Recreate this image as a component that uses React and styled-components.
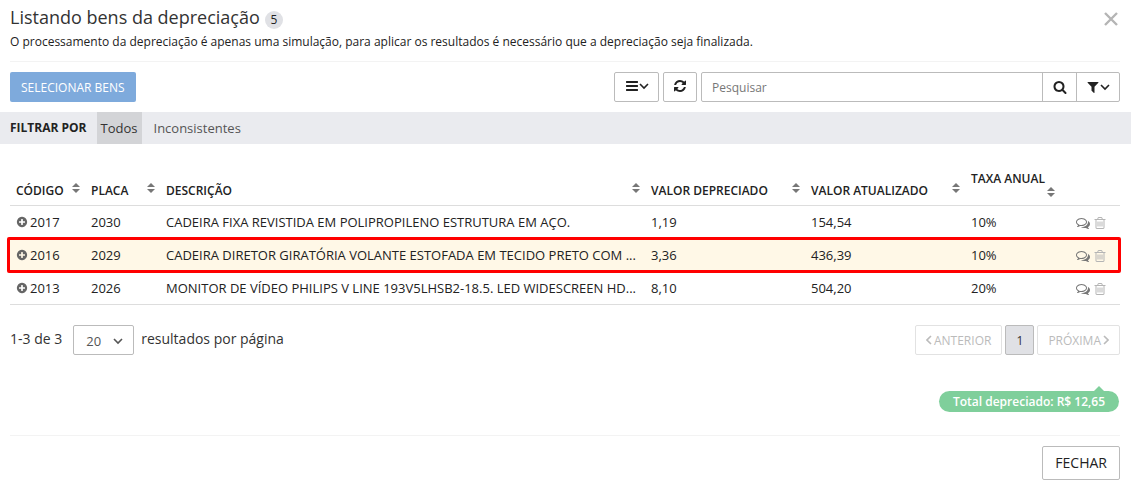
import { useState } from "react";
import styled, { createGlobalStyle } from "styled-components";

const ICONS = {
    bars: "M1664 1344v128q0 26-19 45t-45 19h-1408q-26 0-45-19t-19-45v-128q0-26 19-45t45-19h1408q26 0 45 19t19 45zm0-512v128q0 26-19 45t-45 19h-1408q-26 0-45-19t-19-45v-128q0-26 19-45t45-19h1408q26 0 45 19t19 45zm0-512v128q0 26-19 45t-45 19h-1408q-26 0-45-19t-19-45v-128q0-26 19-45t45-19h1408q26 0 45 19t19 45z",
    refresh: "M1639 1056q0 5-1 7-64 268-268 434.5t-478 166.5q-146 0-282.5-55t-243.5-157l-129 129q-19 19-45 19t-45-19-19-45v-448q0-26 19-45t45-19h448q26 0 45 19t19 45-19 45l-137 137q71 66 161 102t187 36q134 0 250-65t186-179q11-17 53-117 8-23 30-23h192q13 0 22.5 9.5t9.5 22.5zm25-800v448q0 26-19 45t-45 19h-448q-26 0-45-19t-19-45 19-45l138-138q-148-137-349-137-134 0-250 65t-186 179q-11 17-53 117-8 23-30 23h-199q-13 0-22.5-9.5t-9.5-22.5v-7q65-268 270-434.5t480-166.5q146 0 284 55.5t245 156.5l130-129q19-19 45-19t45 19 19 45z",
    search: "M1216 832q0-185-131.5-316.5t-316.5-131.5-316.5 131.5-131.5 316.5 131.5 316.5 316.5 131.5 316.5-131.5 131.5-316.5zm512 832q0 52-38 90t-90 38q-54 0-90-38l-343-342q-179 124-399 124-143 0-273.5-55.5t-225-150-150-225-55.5-273.5 55.5-273.5 150-225 225-150 273.5-55.5 273.5 55.5 225 150 150 225 55.5 273.5q0 220-124 399l343 343q37 37 37 90z",
    filter: "M1595 295q17 41-14 70l-493 493v742q0 42-39 59-13 5-25 5-27 0-45-19l-256-256q-19-19-19-45v-486l-493-493q-31-29-14-70 17-39 59-39h1280q42 0 59 39z",
    plus: "M1344 960v-128q0-26-19-45t-45-19h-256v-256q0-26-19-45t-45-19h-128q-26 0-45 19t-19 45v256h-256q-26 0-45 19t-19 45v128q0 26 19 45t45 19h256v256q0 26 19 45t45 19h128q26 0 45-19t19-45v-256h256q26 0 45-19t19-45zm320-64q0 209-103 385.5t-279.5 279.5-385.5 103-385.5-103-279.5-279.5-103-385.5 103-385.5 279.5-279.5 385.5-103 385.5 103 279.5 279.5 103 385.5z",
    trash: "M704 736v576q0 14-9 23t-23 9h-64q-14 0-23-9t-9-23v-576q0-14 9-23t23-9h64q14 0 23 9t9 23zm256 0v576q0 14-9 23t-23 9h-64q-14 0-23-9t-9-23v-576q0-14 9-23t23-9h64q14 0 23 9t9 23zm256 0v576q0 14-9 23t-23 9h-64q-14 0-23-9t-9-23v-576q0-14 9-23t23-9h64q14 0 23 9t9 23zm128 724v-948h-896v948q0 22 7 40.5t14.5 27 10.5 8.5h832q3 0 10.5-8.5t14.5-27 7-40.5zm-672-1076h448l-48-117q-7-9-17-11h-317q-10 2-17 11zm928 32v64q0 14-9 23t-23 9h-96v948q0 83-47 143.5t-113 60.5h-832q-66 0-113-58.5t-47-141.5v-952h-96q-14 0-23-9t-9-23v-64q0-14 9-23t23-9h309l70-167q15-37 54-63t79-26h320q40 0 79 26t54 63l70 167h309q14 0 23 9t9 23z",
    comments: "M704 384q-153 0-286 52t-211.5 141-78.5 191q0 82 53 158t149 132l97 56-35 84q34-20 62-39l44-31 53 10q78 14 153 14 153 0 286-52t211.5-141 78.5-191-78.5-191-211.5-141-286-52zm0-128q191 0 353.5 68.5t256.5 186.5 94 257-94 257-256.5 186.5-353.5 68.5q-86 0-176-16-124 88-278 128-36 9-86 16h-3q-11 0-20.5-8t-11.5-21q-1-3-1-6.5t.5-6.5 2-6l2.5-5 3.5-5.5 4-5 4.5-5 4-4.5q5-6 23-25t26-29.5 22.5-29 25-38.5 20.5-44q-124-72-195-177t-71-224q0-139 94-257t256.5-186.5 353.5-68.5zm822 1169q10 24 20.5 44t25 38.5 22.5 29 26 29.5 23 25q1 1 4 4.5t4.5 5 4 5 3.5 5.5l2.5 5 2 6 .5 6.5-1 6.5q-3 14-13 22t-22 7q-50-7-86-16-154-40-278-128-90 16-176 16-271 0-472-132 58 4 88 4 161 0 309-45t264-129q125-92 192-212t67-254q0-77-23-152 129 71 204 178t75 230q0 120-71 224.5t-195 176.5z",
}

const ANGLES = {
    down: { box: "0 0 10 14", d: "M1 5l4 4 4-4" },
    left: { box: "0 0 6 14", d: "M5 3L1 7l4 4" },
    right: { box: "0 0 6 14", d: "M1 3l4 4-4 4" },
}

const columns = [
    { label: "CÓDIGO", width: 75 },
    { label: "PLACA", width: 75 },
    { label: "DESCRIÇÃO" },
    { label: "VALOR DEPRECIADO", width: 160 },
    { label: "VALOR ATUALIZADO", width: 160 },
    { label: "TAXA ANUAL", width: 95 },
]

const bens = [
    { codigo: 2017, placa: 2030, descricao: "CADEIRA FIXA REVISTIDA EM POLIPROPILENO ESTRUTURA EM AÇO.", depreciado: "1,19", atualizado: "154,54", taxa: "10%" },
    { codigo: 2016, placa: 2029, descricao: "CADEIRA DIRETOR GIRATÓRIA VOLANTE ESTOFADA EM TECIDO PRETO COM ...", depreciado: "3,36", atualizado: "436,39", taxa: "10%", destaque: true },
    { codigo: 2013, placa: 2026, descricao: "MONITOR DE VÍDEO PHILIPS V LINE 193V5LHSB2-18.5. LED WIDESCREEN HD...", depreciado: "8,10", atualizado: "504,20", taxa: "20%" },
]

function Icon({ name, size = 14 }) {
    return (
        <svg width={size} height={size} viewBox="0 0 1792 1792" fill="currentColor" aria-hidden="true">
            <path d={ICONS[name]} />
        </svg>
    )
}

function Angle({ to }) {
    const { box, d } = ANGLES[to]
    return (
        <svg width={to === "down" ? 10 : 6} height="14" viewBox={box} fill="none" stroke="currentColor" strokeWidth="1.6" aria-hidden="true">
            <path d={d} />
        </svg>
    )
}

function SortIcon() {
    return (
        <svg width="8" height="12" viewBox="0 0 8 12" fill="#777777" aria-hidden="true">
            <path d="M4 0l4 4H0zM4 10l4-4H0z" />
        </svg>
    )
}

export default function App() {
    const [filtro, setFiltro] = useState("Todos")
    const [busca, setBusca] = useState("")

    return (
        <Modal>
            <GlobalStyle />
            <Header>
                <div>
                    <TitleRow>
                        <Title>Listando bens da depreciação</Title>
                        <Badge>5</Badge>
                    </TitleRow>
                    <Subtitle>
                        O processamento da depreciação é apenas uma simulação, para aplicar os resultados é necessário que a depreciação seja finalizada.
                    </Subtitle>
                </div>
                <CloseButton aria-label="Fechar">
                    <svg width="14" height="14" viewBox="0 0 14 14" stroke="#b5b5b5" strokeWidth="2.4" aria-hidden="true">
                        <path d="M1 1l12 12M13 1L1 13" />
                    </svg>
                </CloseButton>
            </Header>

            <Toolbar>
                <PrimaryButton>SELECIONAR BENS</PrimaryButton>
                <Tools>
                    <ToolButton $width={45} aria-label="Colunas"><Icon name="bars" /><Angle to="down" /></ToolButton>
                    <ToolButton $width={34} aria-label="Atualizar"><Icon name="refresh" /></ToolButton>
                    <SearchGroup>
                        <SearchInput
                            aria-label="Pesquisar"
                            placeholder="Pesquisar"
                            value={busca}
                            onChange={e => setBusca(e.target.value)}
                        />
                        <GroupButton $width={34} aria-label="Buscar"><Icon name="search" /></GroupButton>
                        <GroupButton $width={43} aria-label="Filtros"><Icon name="filter" /><Angle to="down" /></GroupButton>
                    </SearchGroup>
                </Tools>
            </Toolbar>

            <FilterBar>
                <FilterLabel>FILTRAR POR</FilterLabel>
                {["Todos", "Inconsistentes"].map(el =>
                    <FilterTab key={el} $active={filtro === el} onClick={() => setFiltro(el)}>{el}</FilterTab>
                )}
            </FilterBar>

            <Table>
                <colgroup>
                    {columns.map(col => <Col key={col.label} $width={col.width} />)}
                    <Col $width={60} />
                </colgroup>
                <thead>
                    <tr>
                        {columns.map(col =>
                            <Th key={col.label}>
                                <SortButton>{col.label}<SortIcon /></SortButton>
                            </Th>
                        )}
                        <Th />
                    </tr>
                </thead>
                <tbody>
                    {bens.map(el =>
                        <Row key={el.codigo} $destaque={el.destaque}>
                            <Td>
                                <Code>
                                    <IconButton aria-label="Expandir" $color="#666666"><Icon name="plus" size={12} /></IconButton>
                                    {el.codigo}
                                </Code>
                            </Td>
                            <Td>{el.placa}</Td>
                            <DescriptionTd>{el.descricao}</DescriptionTd>
                            <Td>{el.depreciado}</Td>
                            <Td>{el.atualizado}</Td>
                            <Td>{el.taxa}</Td>
                            <Td>
                                <Actions>
                                    <IconButton aria-label="Comentários" $color="#777777"><Icon name="comments" /></IconButton>
                                    <IconButton aria-label="Excluir" $color="#b5b5b5"><Icon name="trash" /></IconButton>
                                </Actions>
                            </Td>
                        </Row>
                    )}
                </tbody>
            </Table>

            <Pagination>
                <PageInfo>
                    <span>1-3 de 3</span>
                    <SelectBox>
                        <PageSelect aria-label="Resultados por página" defaultValue="20">
                            <option>20</option>
                            <option>50</option>
                        </PageSelect>
                        <Angle to="down" />
                    </SelectBox>
                    <span>resultados por página</span>
                </PageInfo>
                <Pages>
                    <PageButton disabled><Angle to="left" />ANTERIOR</PageButton>
                    <PageButton $current>1</PageButton>
                    <PageButton disabled>PRÓXIMA<Angle to="right" /></PageButton>
                </Pages>
            </Pagination>

            <Total>Total depreciado: R$ 12,65</Total>

            <Footer>
                <FooterButton>FECHAR</FooterButton>
            </Footer>
        </Modal>
    )
}

const GlobalStyle = createGlobalStyle`
    * {
        box-sizing: border-box;
    }
    body {
        margin: 0;
        background: #ffffff;
        color: #222222;
        font-family: "Open Sans", sans-serif;
        font-size: 13px;
    }
    button, input, select {
        font-family: inherit;
        color: inherit;
        margin: 0;
    }
    button {
        padding: 0;
        border: none;
        background: none;
        cursor: pointer;
    }
    svg {
        display: block;
        flex-shrink: 0;
    }
`

const Modal = styled.div`
    display: flex;
    flex-direction: column;
`

const Header = styled.header`
    display: flex;
    justify-content: space-between;
    align-items: flex-start;
    margin: 0 11px 0 10px;
    padding: 5px 0 10px;
    border-bottom: 1px solid #f3f3f3;
`

const TitleRow = styled.div`
    display: flex;
    align-items: flex-end;
    gap: 5px;
`

const Title = styled.h1`
    margin: 0;
    font-size: 18px;
    font-weight: 400;
    line-height: 24px;
    color: #333333;
`

const Badge = styled.span`
    width: 18px;
    border-radius: 9px;
    background: #e0e1e5;
    font-size: 12px;
    line-height: 18px;
    text-align: center;
`

const Subtitle = styled.p`
    margin: 4px 0 0;
    font-size: 12px;
    line-height: 18px;
`

const CloseButton = styled.button`
    margin-top: 7px;
    margin-right: 2px;
`

const Toolbar = styled.div`
    display: flex;
    justify-content: space-between;
    padding: 10px 11px 10px 10px;
`

const PrimaryButton = styled.button`
    height: 30px;
    padding: 0 11px;
    border-radius: 2px;
    background: #7eaadc;
    color: #ffffff;
    font-size: 12px;
`

const Tools = styled.div`
    display: flex;
    gap: 4px;
`

const ToolButton = styled.button`
    display: flex;
    align-items: center;
    justify-content: center;
    width: ${props => props.$width}px;
    height: 30px;
    padding-bottom: 2px;
    border: 1px solid #bbbbbb;
    border-radius: 2px;
`

const SearchGroup = styled.div`
    display: flex;
    width: 419px;
    height: 30px;
    border: 1px solid #bbbbbb;
    border-radius: 2px;
`

const SearchInput = styled.input`
    flex: 1;
    min-width: 0;
    padding: 0 10px;
    border: none;
    outline: none;
    background: none;
    font-size: 12px;
    &::placeholder {
        color: #777777;
    }
`

const GroupButton = styled.button`
    display: flex;
    align-items: center;
    justify-content: center;
    width: ${props => props.$width}px;
    border-left: 1px solid #bbbbbb;
`

const FilterBar = styled.nav`
    display: flex;
    height: 32px;
    padding-left: 10px;
    background: #eaebef;
`

const FilterLabel = styled.span`
    margin-right: 10px;
    font-size: 12px;
    font-weight: 700;
    line-height: 32px;
`

const FilterTab = styled.button`
    margin-right: 8px;
    padding: 0 4px;
    background: ${props => props.$active ? "#d3d4d7" : "transparent"};
    color: ${props => props.$active ? "#333333" : "#555555"};
    font-size: 13px;
`

const Table = styled.table`
    width: calc(100% - 21px);
    margin: 20px 11px 0 10px;
    table-layout: fixed;
    border-collapse: separate;
    border-spacing: 0;
`

const Col = styled.col`
    width: ${props => props.$width ? `${props.$width}px` : "auto"};
`

const Th = styled.th`
    padding: 7px 5px 6px 6px;
    border-bottom: 1px solid #dddddd;
    vertical-align: bottom;
`

const SortButton = styled.button`
    display: flex;
    flex-wrap: wrap;
    justify-content: space-between;
    column-gap: 4px;
    width: 100%;
    font-size: 12px;
    font-weight: 600;
    line-height: 16px;
    text-align: left;
    svg {
        margin-left: auto;
    }
`

const Td = styled.td`
    height: 33px;
    padding: 0 6px 2px;
    white-space: nowrap;
    font-size: 13px;
`

const DescriptionTd = styled(Td)`
    padding-right: 0;
    overflow: hidden;
    text-overflow: ellipsis;
`

/* a moldura fica na primeira célula, mas se estende pela linha toda */
const Row = styled.tr`
    position: relative;
    background: ${props => props.$destaque ? "#fff8e7" : "transparent"};
    &:last-child td {
        padding-bottom: 1px;
        border-bottom: 1px solid #dddddd;
    }
    td:first-child::after {
        content: "";
        display: ${props => props.$destaque ? "block" : "none"};
        position: absolute;
        inset: -2px -1px -1px -3px;
        border: 3px solid #ff0000;
        border-radius: 2px;
        pointer-events: none;
    }
`

const Code = styled.div`
    display: flex;
    align-items: center;
    gap: 2px;
`

const IconButton = styled.button`
    color: ${props => props.$color};
`

const Actions = styled.div`
    display: flex;
    align-items: center;
    justify-content: flex-end;
    gap: 3px;
    padding: 2px 7px 0 0;
`

const Pagination = styled.div`
    display: flex;
    justify-content: space-between;
    padding: 20px 11px 0 10px;
`

const PageInfo = styled.div`
    display: flex;
    align-items: flex-start;
    color: #333333;
    font-size: 14px;
    line-height: 28px;
`

const SelectBox = styled.div`
    position: relative;
    margin: 0 7px 0 11px;
    svg {
        position: absolute;
        top: 9px;
        right: 11px;
        color: #555555;
        pointer-events: none;
    }
`

const PageSelect = styled.select`
    display: block;
    width: 61px;
    height: 30px;
    padding: 2px 12px 0;
    border: 1px solid #bbbbbb;
    border-radius: 2px;
    background: #ffffff;
    appearance: none;
    color: #555555;
    font-size: 13px;
`

const Pages = styled.div`
    display: flex;
    gap: 3px;
`

const PageButton = styled.button`
    display: flex;
    align-items: center;
    justify-content: center;
    gap: 2px;
    min-width: 29px;
    height: 30px;
    padding: 0 10px;
    border: 1px solid ${props => props.$current ? "#bbbbbb" : "#e2e2e2"};
    border-radius: 2px;
    background: ${props => props.$current ? "#e0e1e5" : "#ffffff"};
    color: ${props => props.$current ? "#333333" : "#bbbbbb"};
    font-size: 12px;
`

const Total = styled.div`
    position: relative;
    align-self: flex-end;
    margin: 36px 12px 23px 0;
    padding: 0 14px;
    border-radius: 11px;
    background: #7fcf9b;
    color: #ffffff;
    font-size: 12px;
    font-weight: 600;
    line-height: 21px;
    &::before {
        content: "";
        position: absolute;
        top: -5px;
        right: 15px;
        border: 5px solid transparent;
        border-top: none;
        border-bottom-color: #7fcf9b;
    }
`

const Footer = styled.footer`
    display: flex;
    justify-content: flex-end;
    margin: 0 11px 0 10px;
    padding: 10px 0 7px;
    border-top: 1px solid #f3f3f3;
`

const FooterButton = styled.button`
    height: 34px;
    padding: 0 12px 2px;
    border: 1px solid #bbbbbb;
    border-radius: 2px;
    font-size: 14px;
`
